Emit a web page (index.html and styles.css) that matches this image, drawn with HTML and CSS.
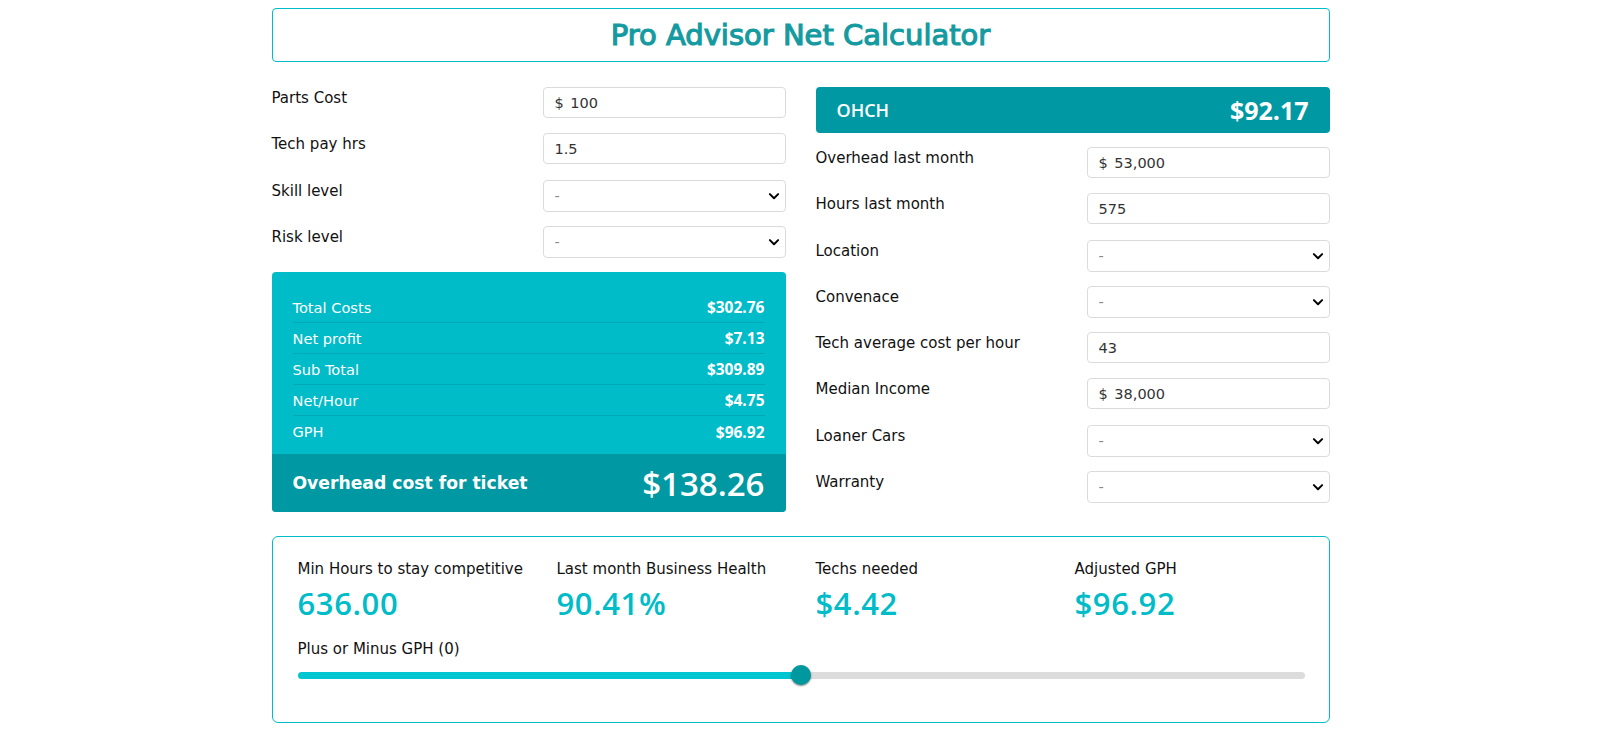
FILE: index.html
```html
<!DOCTYPE html>
<html lang="en">
<head>
<meta charset="utf-8">
<title>Pro Advisor Net Calculator</title>
<link rel="stylesheet" href="styles.css">
</head>
<body>
<div class="page">
  <header class="title-box"><h1 class="title">Pro Advisor Net Calculator</h1></header>

  <div class="main">
    <section class="col col-left">
      <div class="field"><label class="label">Parts Cost</label><input class="control" type="text" value="$ 100"></div>
      <div class="field"><label class="label">Tech pay hrs</label><input class="control" type="text" value="1.5"></div>
      <div class="field"><label class="label">Skill level</label>
        <div class="select-wrap"><select class="control select"><option>-</option></select>
          <svg class="chev" viewBox="0 0 16 16" width="12" height="12"><path d="M2.5 5.5 L8 11 L13.5 5.5" fill="none" stroke="#000" stroke-width="2.6" stroke-linecap="round" stroke-linejoin="round"/></svg></div></div>
      <div class="field"><label class="label">Risk level</label>
        <div class="select-wrap"><select class="control select"><option>-</option></select>
          <svg class="chev" viewBox="0 0 16 16" width="12" height="12"><path d="M2.5 5.5 L8 11 L13.5 5.5" fill="none" stroke="#000" stroke-width="2.6" stroke-linecap="round" stroke-linejoin="round"/></svg></div></div>

      <div class="summary">
        <div class="summary-list">
          <div class="srow"><span>Total Costs</span><b>$302.76</b></div>
          <div class="srow"><span>Net profit</span><b>$7.13</b></div>
          <div class="srow"><span>Sub Total</span><b>$309.89</b></div>
          <div class="srow"><span>Net/Hour</span><b>$4.75</b></div>
          <div class="srow"><span>GPH</span><b>$96.92</b></div>
        </div>
        <div class="summary-total"><span class="st-label">Overhead cost for ticket</span><span class="st-value">$138.26</span></div>
      </div>
    </section>

    <section class="col col-right">
      <div class="ohch"><span class="ohch-label">OHCH</span><span class="ohch-value">$92.17</span></div>
      <div class="field"><label class="label">Overhead last month</label><input class="control" type="text" value="$ 53,000"></div>
      <div class="field"><label class="label">Hours last month</label><input class="control" type="text" value="575"></div>
      <div class="field"><label class="label">Location</label>
        <div class="select-wrap"><select class="control select"><option>-</option></select>
          <svg class="chev" viewBox="0 0 16 16" width="12" height="12"><path d="M2.5 5.5 L8 11 L13.5 5.5" fill="none" stroke="#000" stroke-width="2.6" stroke-linecap="round" stroke-linejoin="round"/></svg></div></div>
      <div class="field"><label class="label">Convenace</label>
        <div class="select-wrap"><select class="control select"><option>-</option></select>
          <svg class="chev" viewBox="0 0 16 16" width="12" height="12"><path d="M2.5 5.5 L8 11 L13.5 5.5" fill="none" stroke="#000" stroke-width="2.6" stroke-linecap="round" stroke-linejoin="round"/></svg></div></div>
      <div class="field"><label class="label">Tech average cost per hour</label><input class="control" type="text" value="43"></div>
      <div class="field"><label class="label">Median Income</label><input class="control" type="text" value="$ 38,000"></div>
      <div class="field"><label class="label">Loaner Cars</label>
        <div class="select-wrap"><select class="control select"><option>-</option></select>
          <svg class="chev" viewBox="0 0 16 16" width="12" height="12"><path d="M2.5 5.5 L8 11 L13.5 5.5" fill="none" stroke="#000" stroke-width="2.6" stroke-linecap="round" stroke-linejoin="round"/></svg></div></div>
      <div class="field"><label class="label">Warranty</label>
        <div class="select-wrap"><select class="control select"><option>-</option></select>
          <svg class="chev" viewBox="0 0 16 16" width="12" height="12"><path d="M2.5 5.5 L8 11 L13.5 5.5" fill="none" stroke="#000" stroke-width="2.6" stroke-linecap="round" stroke-linejoin="round"/></svg></div></div>
    </section>
  </div>

  <section class="stats-box">
    <div class="stats">
      <div class="stat"><div class="stat-label">Min Hours to stay competitive</div><div class="stat-value">636.00</div></div>
      <div class="stat"><div class="stat-label">Last month Business Health</div><div class="stat-value">90.41%</div></div>
      <div class="stat"><div class="stat-label">Techs needed</div><div class="stat-value">$4.42</div></div>
      <div class="stat"><div class="stat-label">Adjusted GPH</div><div class="stat-value">$96.92</div></div>
    </div>
    <div class="slider-label">Plus or Minus GPH (0)</div>
    <input class="slider" type="range" min="-100" max="100" value="0">
  </section>
</div>
</body>
</html>
```
FILE: styles.css
```css
* { box-sizing: border-box; }
body {
  margin: 0;
  background: #fff;
  font-family: "DejaVu Sans", "Open Sans", sans-serif;
  color: #111;
}
.page {
  width: 1058px;
  margin: 8px auto 0;
}
.title-box {
  height: 54px;
  border: 1px solid #00bcc8;
  border-radius: 4px;
  display: flex;
  align-items: center;
  justify-content: center;
}
.title {
  margin: 0;
  font-size: 29px;
  font-weight: 400;
  color: #149aa0;
  -webkit-text-stroke: 1.2px #149aa0;
}
.main {
  display: grid;
  grid-template-columns: 1fr 1fr;
  column-gap: 30px;
  margin-top: 25px;
  align-items: start;
}
.col {
  display: flex;
  flex-direction: column;
  gap: 15.3px;
}
.field {
  display: grid;
  grid-template-columns: 1fr 243px;
  height: 31px;
  align-items: start;
}
.label {
  font-size: 15px;
  line-height: 22px;
  color: #111;
}
.control {
  width: 100%;
  height: 31px;
  border: 1px solid #d9dcdf;
  border-radius: 4px;
  padding: 0 11px;
  font-family: inherit;
  font-size: 14.5px;
  word-spacing: 2px;
  color: #333;
  background: #fff;
  outline: none;
}
.select-wrap { position: relative; }
.select {
  height: 32px;
  appearance: none;
  -webkit-appearance: none;
  color: #888;
}
.chev {
  position: absolute;
  right: 6px;
  top: 10px;
  pointer-events: none;
}
.summary {
  border-radius: 4px;
  overflow: hidden;
  background: #00bbc8;
  color: #fff;
}
.summary-list { padding: 20px 21px 7px; }
.srow {
  height: 31px;
  display: flex;
  justify-content: space-between;
  align-items: center;
  font-size: 14.6px;
  border-bottom: 1px solid rgba(0, 80, 90, 0.18);
}
.srow:last-child { border-bottom: 0; }
.srow b {
  font-family: "Open Sans", sans-serif;
  font-size: 15.5px;
  font-weight: 700;
}
.summary-total {
  height: 58px;
  background: #0099a3;
  display: flex;
  justify-content: space-between;
  align-items: center;
  padding: 0 21px;
}
.st-label { font-size: 17.2px; font-weight: 700; }
.st-value {
  font-family: "Open Sans", sans-serif;
  font-size: 33px;
  font-weight: 600;
}
.ohch {
  height: 46px;
  background: #0099a3;
  border-radius: 4px;
  color: #fff;
  display: flex;
  justify-content: space-between;
  align-items: center;
  padding: 0 21px;
  margin-bottom: -1.3px;
}
.ohch-label {
  font-family: "Open Sans", sans-serif;
  font-size: 18px;
  font-weight: 600;
}
.ohch-value {
  font-family: "Open Sans", sans-serif;
  font-size: 25px;
  font-weight: 700;
}
.stats-box {
  margin-top: 24px;
  border: 1px solid #00bcc8;
  border-radius: 6px;
  padding: 21px 24px 37px 25px;
}
.stats {
  display: grid;
  grid-template-columns: repeat(4, 1fr);
  column-gap: 29px;
}
.stat-label { font-size: 15px; line-height: 22px; color: #111; }
.stat-value {
  margin-top: 5px;
  font-family: "Open Sans", sans-serif;
  font-size: 31px;
  line-height: 36px;
  font-weight: 600;
  letter-spacing: 0.6px;
  color: #00bcc8;
}
.slider-label {
  margin-top: 17px;
  font-size: 15px;
  line-height: 22px;
  color: #111;
}
.slider {
  display: block;
  width: 100%;
  margin: 5px 0 0;
  height: 20px;
  -webkit-appearance: none;
  appearance: none;
  background: transparent;
}
.slider::-webkit-slider-runnable-track {
  height: 7px;
  border-radius: 4px;
  background: linear-gradient(to right, #00c6d2 0%, #00c6d2 50%, #dcdcdc 50%, #dcdcdc 100%);
}
.slider::-webkit-slider-thumb {
  -webkit-appearance: none;
  width: 20px;
  height: 20px;
  margin-top: -6.5px;
  border-radius: 50%;
  background: #00989f;
  box-shadow: 0 1px 2px rgba(0, 0, 0, 0.5);
  border: 0;
}
```
